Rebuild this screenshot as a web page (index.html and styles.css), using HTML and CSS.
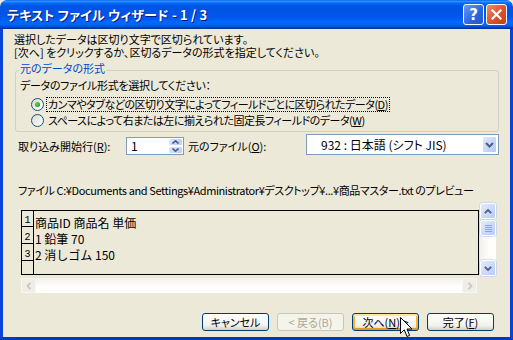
FILE: index.html
```html
<!DOCTYPE html>
<html lang="ja">
<head>
  <meta charset="UTF-8">
  <title>テキスト ファイル ウィザード - 1 / 3</title>
  <link rel="stylesheet" href="styles.css">
</head>
<body>
  <div class="window">
    <div class="titlebar">
      <span class="title">テキスト ファイル ウィザード - 1 / 3</span>
      <div class="caption-buttons">
        <span class="cap-btn help">?</span>
        <span class="cap-btn close">
          <svg width="11" height="11" viewBox="0 0 11 11"><path d="M1.5 1.5 L9.5 9.5 M9.5 1.5 L1.5 9.5" stroke="#fff" stroke-width="2.2" stroke-linecap="square"/></svg>
        </span>
      </div>
    </div>

    <div class="frame">
      <div class="intro">
        <div>選択したデータは区切り文字で区切られています。</div>
        <div>[次へ] をクリックするか、区切るデータの形式を指定してください。</div>
      </div>

      <fieldset class="group">
        <legend>元のデータの形式</legend>
        <div class="group-hint">データのファイル形式を選択してください：</div>
        <label class="option first">
          <span class="radio checked"></span>
          <span class="option-text focus">カンマやタブなどの区切り文字によってフィールドごとに区切られたデータ(<u>D</u>)</span>
        </label>
        <label class="option">
          <span class="radio"></span>
          <span class="option-text">スペースによって右または左に揃えられた固定長フィールドのデータ(<u>W</u>)</span>
        </label>
      </fieldset>

      <div class="import-row">
        <span class="field-label">取り込み開始行(<u>R</u>):</span>
        <div class="spin">
          <span class="spin-value">1</span>
          <div class="spin-buttons">
            <span class="spin-btn">
              <svg width="7" height="4" viewBox="0 0 7 4"><path d="M0.5 3.5 L3.5 0.8 L6.5 3.5" fill="none" stroke="#4d6185" stroke-width="1.6"/></svg>
            </span>
            <span class="spin-btn">
              <svg width="7" height="4" viewBox="0 0 7 4"><path d="M0.5 0.5 L3.5 3.2 L6.5 0.5" fill="none" stroke="#4d6185" stroke-width="1.6"/></svg>
            </span>
          </div>
        </div>
        <span class="field-label second">元のファイル(<u>O</u>):</span>
        <div class="combo">
          <span class="combo-value">932 : 日本語 (シフト JIS)</span>
          <span class="combo-btn">
            <svg width="9" height="6" viewBox="0 0 9 6"><path d="M1 1 L4.5 4.5 L8 1" fill="none" stroke="#4d6185" stroke-width="2"/></svg>
          </span>
        </div>
      </div>

      <div class="preview-caption">ファイル C:¥Documents and Settings¥Administrator¥デスクトップ¥...¥商品マスター.txt のプレビュー</div>

      <div class="preview">
        <div class="preview-main">
          <div class="preview-box">
            <div class="row-nums">
              <span>1</span>
              <span>2</span>
              <span>3</span>
              <span class="empty"></span>
            </div>
            <div class="preview-text">
              <div>商品ID 商品名 単価</div>
              <div>1 鉛筆 70</div>
              <div>2 消しゴム 150</div>
            </div>
          </div>
          <div class="hscroll">
            <span class="sb-btn off">
              <svg width="6" height="8" viewBox="0 0 6 8"><path d="M4.5 0.8 L1.5 4 L4.5 7.2" fill="none" stroke="#c9c7ba" stroke-width="1.8"/></svg>
            </span>
            <span class="sb-btn off">
              <svg width="6" height="8" viewBox="0 0 6 8"><path d="M1.5 0.8 L4.5 4 L1.5 7.2" fill="none" stroke="#c9c7ba" stroke-width="1.8"/></svg>
            </span>
          </div>
        </div>
        <div class="vscroll">
          <span class="sb-btn">
            <svg width="8" height="5" viewBox="0 0 8 5"><path d="M0.8 4.2 L4 1 L7.2 4.2" fill="none" stroke="#4d6185" stroke-width="1.8"/></svg>
          </span>
          <span class="sb-btn thumb">
            <i></i><i></i><i></i><i></i>
          </span>
          <span class="sb-btn down">
            <svg width="8" height="5" viewBox="0 0 8 5"><path d="M0.8 0.8 L4 4 L7.2 0.8" fill="none" stroke="#4d6185" stroke-width="1.8"/></svg>
          </span>
        </div>
      </div>

      <div class="buttons">
        <button type="button" class="btn">キャンセル</button>
        <button type="button" class="btn" disabled>&lt; 戻る(B)</button>
        <button type="button" class="btn hot">次へ(<u>N</u>) &gt;</button>
        <button type="button" class="btn">完了(<u>F</u>)</button>
      </div>
    </div>

    <!-- mouse pointer over the Next button -->
    <svg class="cursor" width="13" height="21" viewBox="0 0 13 21">
      <path d="M0.5 0.5 L0.5 16.5 L4.3 12.8 L7 19.5 L9.6 18.4 L7 12 L12 12 Z" fill="#fff" stroke="#000" stroke-width="1"/>
    </svg>
  </div>
</body>
</html>
```

FILE: styles.css
```css
body {
    margin: 0;
    font-family: "Noto Sans CJK JP", sans-serif;
    font-size: 11px;
    color: #000;
    background: #ece9d8;
}
.window {
    position: relative;
    width: 513px;
    height: 340px;
    display: flex;
    flex-direction: column;
    font-feature-settings: "palt";
}
u {
    text-decoration-thickness: 1px;
    text-underline-offset: 1px;
}

/* title bar */
.titlebar {
    flex: none;
    height: 29px;
    box-sizing: border-box;
    padding: 0 6px 0 7px;
    display: flex;
    align-items: center;
    justify-content: space-between;
    border-radius: 7px 7px 0 0;
    background: linear-gradient(#0058ee 0%, #3593ff 4%, #288eff 6%, #127dff 8%, #036ffc 10%, #0262ee 14%, #0057e5 20%, #0054e3 24%, #0055eb 56%, #005bf5 66%, #026afe 76%, #0062ef 86%, #0052d6 92%, #0040ab 96%, #003092 100%);
}
.title {
    color: #fff;
    font-weight: bold;
    font-size: 13px;
    line-height: 15px;
    letter-spacing: 0.2px;
    text-shadow: 1px 1px #0a1883;
}
.caption-buttons {
    display: flex;
    gap: 2px;
}
.cap-btn {
    width: 21px;
    height: 21px;
    box-sizing: border-box;
    border: 1px solid #fff;
    border-radius: 3px;
    display: flex;
    align-items: center;
    justify-content: center;
}
.help {
    color: #fff;
    font: bold 15px "DejaVu Sans", sans-serif;
    background: linear-gradient(135deg, #6b9af8, #2a63e0 60%, #1f55d2);
}
.close {
    background: linear-gradient(135deg, #eb9070, #e0542f 50%, #c73d15);
}

/* dialog body */
.frame {
    flex: 1;
    display: flex;
    flex-direction: column;
    padding-top: 4px;
    border: 3px solid #0843d7;
    border-top: 0;
    border-bottom-color: #0736c0;
    background: #ece9d8;
}
.intro {
    margin-left: 11px;
    line-height: 13px;
}

.group {
    margin: 3px 11px 0 12px;
    padding: 0 4px 3px 4px;
    min-width: 0;
    border: 1px solid #d0d0bf;
    border-radius: 3px;
}
.group legend {
    margin-left: -1px;
    padding: 0 1px 4px;
    color: #0046d5;
    line-height: 13px;
}
.group-hint {
    line-height: 13px;
    letter-spacing: -0.3px;
}
.option {
    display: flex;
    align-items: center;
    height: 16px;
    margin-left: 11px;
}
.option.first {
    margin-top: 4px;
}
.radio {
    position: relative;
    flex: none;
    width: 13px;
    height: 13px;
    box-sizing: border-box;
    margin-right: 2px;
    border: 1px solid #1c5180;
    border-radius: 50%;
    background: linear-gradient(135deg, #dcd9ce, #fff);
}
.radio.checked::after {
    content: "";
    position: absolute;
    left: 3px;
    top: 3px;
    width: 5px;
    height: 5px;
    border-radius: 50%;
    background: radial-gradient(circle at 40% 40%, #5edb5a, #21a121 70%, #1a821a);
}
.option-text {
    line-height: 13px;
    letter-spacing: -0.5px;
    padding: 0 1px;
    border: 1px dotted transparent;
}
.option-text.focus {
    border-color: #000;
}

/* start row / file origin */
.import-row {
    display: flex;
    align-items: center;
    height: 21px;
    margin: 2px 0 0 15px;
}
.field-label {
    width: 108px;
    padding-top: 3px;
    line-height: 13px;
}
.field-label.second {
    width: 118px;
    margin-left: 4px;
}
.spin {
    align-self: flex-end;
    width: 58px;
    height: 18px;
    box-sizing: border-box;
    display: flex;
    border: 1px solid #7f9db9;
    background: #fff;
}
.spin-value {
    flex: 1;
    padding-left: 4px;
    font-size: 12px;
    line-height: 16px;
}
.spin-buttons {
    width: 15px;
    display: flex;
    flex-direction: column;
}
.spin-btn {
    flex: 1;
    display: flex;
    align-items: center;
    justify-content: center;
    border: 1px solid #fff;
    border-radius: 2px;
    background: linear-gradient(135deg, #dfe8fd, #b9cbf6);
}
.combo {
    width: 193px;
    height: 21px;
    box-sizing: border-box;
    display: flex;
    align-items: center;
    padding-left: 14px;
    border: 1px solid #7f9db9;
    background: #fff;
}
.combo-value {
    flex: 1;
    font-size: 12px;
    line-height: 13px;
}
.combo-btn {
    width: 15px;
    height: 17px;
    box-sizing: border-box;
    margin-right: 1px;
    display: flex;
    align-items: center;
    justify-content: center;
    border: 1px solid #fff;
    border-radius: 2px;
    background: linear-gradient(135deg, #dfe8fd, #b4c8f6);
}

/* preview */
.preview-caption {
    margin: 29px 0 0 15px;
    line-height: 13px;
    letter-spacing: -0.4px;
    white-space: nowrap;
}
.preview {
    display: flex;
    margin: 6px 0 0 18px;
}
.preview-main {
    width: 458px;
    padding-top: 7px;
}
.preview-box {
    height: 65px;
    box-sizing: border-box;
    display: flex;
    border: 1px solid #000;
    font-size: 12px;
    font-feature-settings: normal;
}
.row-nums {
    width: 11px;
    display: flex;
    flex-direction: column;
    border-right: 1px solid #000;
}
.row-nums span {
    height: 17px;
    box-sizing: border-box;
    display: flex;
    align-items: flex-end;
    justify-content: center;
    border-bottom: 1px solid #000;
    font: 10px/10px "Liberation Mono", monospace;
}
.row-nums span:first-child {
    height: 16px;
}
.row-nums .empty {
    flex: 1;
    border-bottom: 0;
}
.preview-text {
    padding: 4px 0 0 1px;
    line-height: 16px;
}
.hscroll {
    width: 456px;
    height: 15px;
    margin-top: 3px;
    display: flex;
    justify-content: space-between;
    background: linear-gradient(#f3f1ec, #fefefb 60%);
}
.vscroll {
    width: 16px;
    height: 73px;
    margin-left: 1px;
    display: flex;
    flex-direction: column;
    background: linear-gradient(90deg, #f3f1ec, #fefefb 60%);
}
.sb-btn {
    width: 16px;
    height: 16px;
    box-sizing: border-box;
    display: flex;
    flex-direction: column;
    align-items: center;
    justify-content: center;
    border: 1px solid #fff;
    border-radius: 2px;
    background: linear-gradient(135deg, #e3ebfe, #b9cbf7);
    box-shadow: 0 0 0 0.5px #b4c6ee;
}
.sb-btn.off {
    width: 15px;
    height: 15px;
    border-color: #f7f6f1;
    background: #efeee6;
    box-shadow: none;
}
.sb-btn.thumb {
    margin-top: 1px;
    gap: 1px;
}
.sb-btn.thumb i {
    width: 7px;
    height: 1px;
    background: #8ea4d8;
}
.sb-btn.down {
    margin-top: auto;
}

/* command buttons */
.buttons {
    display: flex;
    justify-content: flex-end;
    gap: 8px;
    margin: auto 16px 6px 0;
}
.btn {
    width: 67px;
    height: 18px;
    box-sizing: border-box;
    padding: 0;
    display: flex;
    align-items: center;
    justify-content: center;
    border: 1px solid #003c74;
    border-radius: 3px;
    background: linear-gradient(#ffffff, #f3f3ee 70%, #d6d0c5);
    font: 11px/13px "Noto Sans CJK JP", sans-serif;
    font-feature-settings: "palt";
    color: #000;
}
.btn:disabled {
    border-color: #c9c7ba;
    background: #f5f4ea;
    color: #aca899;
}
.btn.hot {
    box-shadow: inset 0 2px #ffe7a2, inset 0 -2px #e5972a, inset 2px 0 #f8b330, inset -2px 0 #f8b330;
}

.cursor {
    position: absolute;
    left: 400px;
    top: 317px;
}
```
